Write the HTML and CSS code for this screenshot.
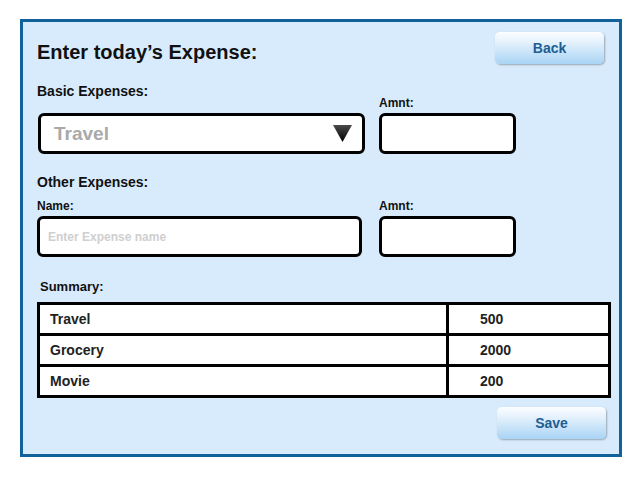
FILE: index.html
```html
<!DOCTYPE html>
<html lang="en">
<head>
  <meta charset="UTF-8" />
  <title>Enter today's Expense</title>
  <link rel="stylesheet" href="styles.css">
</head>
<body>
  <div class="panel">
    <div class="head">
      <h1>Enter today’s Expense:</h1>
      <button class="btn back">Back</button>
    </div>

    <div class="row basic">
      <div class="col main">
        <div class="label">Basic Expenses:</div>
        <div class="select">
          <span>Travel</span>
          <svg width="19" height="17" viewBox="0 0 19 17">
            <defs>
              <linearGradient id="tri" x1="0" y1="0" x2="0" y2="1">
                <stop offset="0" stop-color="#4a4a4a" />
                <stop offset="1" stop-color="#000" />
              </linearGradient>
            </defs>
            <polygon points="0,0 19,0 9.5,17" fill="url(#tri)" />
          </svg>
        </div>
      </div>
      <div class="col amt">
        <div class="small">Amnt:</div>
        <div class="box"></div>
      </div>
    </div>

    <div class="label other-title">Other Expenses:</div>
    <div class="row other">
      <div class="col main">
        <div class="small">Name:</div>
        <input class="name" type="text" placeholder="Enter Expense name" />
      </div>
      <div class="col amt">
        <div class="small">Amnt:</div>
        <div class="box"></div>
      </div>
    </div>

    <div class="summary-title">Summary:</div>
    <table class="summary">
      <tr><td class="item">Travel</td><td class="val">500</td></tr>
      <tr><td class="item">Grocery</td><td class="val">2000</td></tr>
      <tr><td class="item">Movie</td><td class="val">200</td></tr>
    </table>

    <div class="foot">
      <button class="btn save">Save</button>
    </div>
  </div>
</body>
</html>
```

FILE: styles.css
```css
body {
  margin: 0;
  font-family: "Liberation Sans", Arial, sans-serif;
  background: #fff;
}
.panel {
  box-sizing: border-box;
  width: 602px;
  height: 438px;
  margin: 19px 0 0 20px;
  padding: 10px 8px 0 14px;
  background: #d8ebfc;
  border: 3px solid #11629a;
}
.head {
  display: flex;
  justify-content: space-between;
  align-items: flex-start;
}
h1 {
  margin: 8px 0 0;
  font-size: 20px;
  line-height: 24px;
  font-weight: bold;
  color: #111;
}
.btn {
  width: 109px;
  height: 32px;
  border: none;
  border-radius: 5px;
  background: linear-gradient(#fdfeff, #e2f0fc 35%, #a9d4f5);
  box-shadow: 1px 1px 2px rgba(0,0,0,0.3);
  color: #1d5e93;
  font-family: "Liberation Sans", Arial, sans-serif;
  font-size: 14px;
  font-weight: bold;
  padding: 0;
}
.back {
  margin-right: 7px;
}
.row {
  display: flex;
  align-items: flex-end;
  gap: 14px;
}
.basic {
  margin-top: 19px;
}
.col.main {
  width: 328px;
}
.col.amt {
  width: 137px;
}
.label {
  font-size: 14px;
  line-height: 16px;
  font-weight: bold;
  color: #111;
  margin-bottom: 14px;
}
.small {
  font-size: 12px;
  line-height: 14px;
  font-weight: bold;
  color: #111;
  margin-bottom: 3px;
}
.select {
  box-sizing: border-box;
  width: 327px;
  height: 41px;
  margin-left: 1px;
  border: 3px solid #000;
  border-radius: 6px;
  background: #fff;
  display: flex;
  align-items: center;
  justify-content: space-between;
  padding: 0 10px 0 13px;
}
.select span {
  font-size: 19px;
  font-weight: bold;
  color: #a9a9a9;
}
.select svg {
  display: block;
}
.box {
  box-sizing: border-box;
  height: 41px;
  border: 3px solid #000;
  border-radius: 6px;
  background: #fff;
}
.other-title {
  margin: 20px 0 0;
}
.other {
  margin-top: 9px;
}
.name {
  box-sizing: border-box;
  display: block;
  width: 325px;
  height: 41px;
  margin: 0;
  border: 3px solid #000;
  border-radius: 6px;
  background: #fff;
  padding: 0 8px;
  font-family: "Liberation Sans", Arial, sans-serif;
  font-size: 12px;
  font-weight: bold;
  outline: none;
}
.name::placeholder {
  color: #cfcfcf;
}
.summary-title {
  margin: 22px 0 8px;
  padding-left: 3px;
  font-size: 13px;
  line-height: 15px;
  font-weight: bold;
  color: #111;
}
.summary {
  width: 574px;
  border: 3px solid #000;
  border-collapse: separate;
  border-spacing: 0;
  background: #fff;
  table-layout: fixed;
}
.summary td {
  height: 28px;
  padding: 0;
  border-bottom: 3px solid #000;
  font-size: 14px;
  font-weight: bold;
  color: #222;
  vertical-align: middle;
}
.summary tr:last-child td {
  border-bottom: none;
}
.summary td.item {
  width: 396px;
  padding-left: 10px;
  border-right: 3px solid #000;
}
.summary td.val {
  padding-left: 31px;
}
.foot {
  display: flex;
  justify-content: flex-end;
  margin-top: 9px;
}
.save {
  margin-right: 5px;
}
```
